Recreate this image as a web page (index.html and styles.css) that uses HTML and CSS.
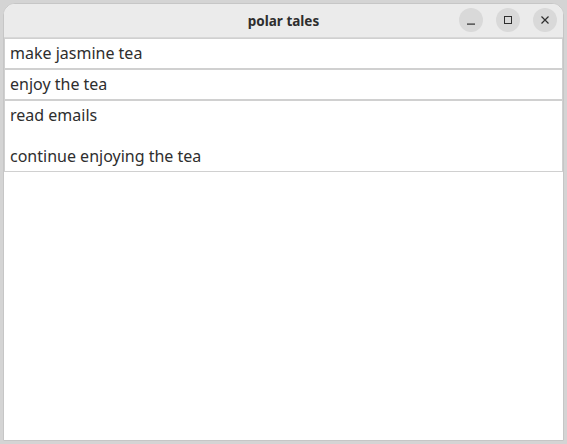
FILE: index.html
```html
<!DOCTYPE html>
<html>
<head>
<meta charset="utf-8">
<link rel="stylesheet" href="styles.css">
</head>
<body>
<div class="window">
  <header class="headerbar">
    <div class="title">polar tales</div>
    <div class="controls">
      <button class="ctl" aria-label="minimize"><svg width="10" height="10" viewBox="0 0 10 10"><rect x="1" y="8.5" width="8" height="1.2" fill="#2e2e2e"/></svg></button>
      <button class="ctl" aria-label="maximize"><svg width="10" height="10" viewBox="0 0 10 10"><rect x="1.5" y="1.5" width="7" height="7" fill="none" stroke="#2e2e2e" stroke-width="1"/></svg></button>
      <button class="ctl" aria-label="close"><svg width="10" height="10" viewBox="0 0 10 10"><path d="M1.5 1.5L8.5 8.5M8.5 1.5L1.5 8.5" stroke="#2e2e2e" stroke-width="1.2"/></svg></button>
    </div>
  </header>
  <main class="content">
    <div class="entry">make jasmine tea</div>
    <div class="entry">enjoy the tea</div>
    <div class="entry multi">read emails

continue enjoying the tea</div>
  </main>
</div>
</body>
</html>
```

FILE: styles.css
```css
html, body {
  margin: 0;
  padding: 0;
  height: 100%;
}
body {
  background: #d4d4d4;
  font-family: "Noto Sans", "Open Sans", sans-serif;
  overflow: hidden;
}
.window {
  margin: 3px;
  height: 438px;
  box-sizing: border-box;
  border: 1px solid #c6c6c6;
  border-radius: 12px 12px 0 0;
  background: #ffffff;
  display: flex;
  flex-direction: column;
  overflow: hidden;
}
.headerbar {
  height: 34px;
  flex: none;
  box-sizing: border-box;
  background: #ebebeb;
  border-bottom: 1px solid #d8d8d8;
  position: relative;
  display: flex;
  align-items: center;
  justify-content: center;
}
.title {
  font-weight: bold;
  font-size: 13.5px;
  color: #2e2e2e;
}
.controls {
  position: absolute;
  right: 6px;
  top: 4px;
  display: flex;
  gap: 13px;
}
.ctl {
  width: 24px;
  height: 24px;
  border-radius: 50%;
  border: none;
  padding: 0;
  background: #d9d9d9;
  display: flex;
  align-items: center;
  justify-content: center;
}
.content {
  flex: 1;
  display: flex;
  flex-direction: column;
}
.entry {
  border: 1px solid #d0d0d0;
  padding: 4px 5px;
  font-size: 16px;
  line-height: 21px;
  color: #2e2e2e;
  white-space: pre-line;
}
.multi {
  line-height: 20.5px;
}
```
